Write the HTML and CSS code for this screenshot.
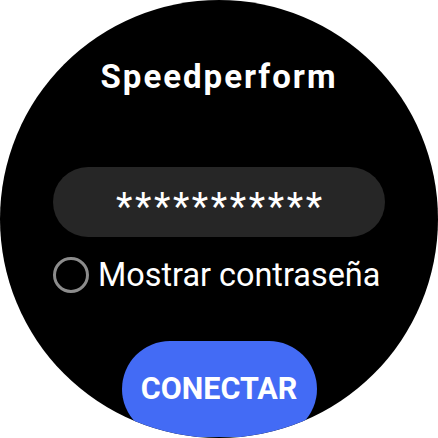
FILE: index.html
```html
<!DOCTYPE html>
<html lang="es">
<head>
<meta charset="utf-8">
<title>Speedperform</title>
<link rel="stylesheet" href="styles.css">
</head>
<body>
<div class="watch">
  <h1 class="title">Speedperform</h1>
  <div class="field"><span class="dots">***********</span></div>
  <label class="check-row">
    <span class="check"></span>
    <span class="check-label">Mostrar contraseña</span>
  </label>
  <div class="connect">CONECTAR</div>
</div>
</body>
</html>
```

FILE: styles.css
```css
html, body {
  margin: 0;
  padding: 0;
  background: #ffffff;
}
body {
  width: 438px;
  height: 438px;
  font-family: Roboto, "Liberation Sans", sans-serif;
}
.watch {
  width: 438px;
  height: 438px;
  border-radius: 50%;
  background: #000000;
  overflow: hidden;
  display: flex;
  flex-direction: column;
  align-items: center;
  color: #ffffff;
}
.title {
  margin: 58px 0 0 0;
  font-size: 33px;
  line-height: 38px;
  font-weight: 700;
  letter-spacing: 2px;
}
.field {
  margin-top: 71px;
  width: 332px;
  height: 70px;
  border-radius: 35px;
  background: #262626;
  display: flex;
  align-items: center;
  justify-content: center;
}
.dots {
  font-size: 38px;
  line-height: 40px;
  letter-spacing: 2.6px;
  padding-top: 10px;
  padding-left: 2.6px;
}
.check-row {
  margin-top: 20px;
  width: 332px;
  height: 36px;
  display: flex;
  align-items: center;
  gap: 9px;
}
.check {
  width: 36px;
  height: 36px;
  box-sizing: border-box;
  border: 3px solid #8c8c8c;
  border-radius: 50%;
  flex: none;
}
.check-label {
  font-size: 32.4px;
  line-height: 36px;
  white-space: nowrap;
}
.connect {
  margin-top: 48px;
  width: 195px;
  height: 96px;
  flex: none;
  border-radius: 48px;
  background: #436bf5;
  color: #ffffff;
  font-size: 30.5px;
  line-height: 34px;
  font-weight: 700;
  display: flex;
  align-items: center;
  justify-content: center;
}
```
